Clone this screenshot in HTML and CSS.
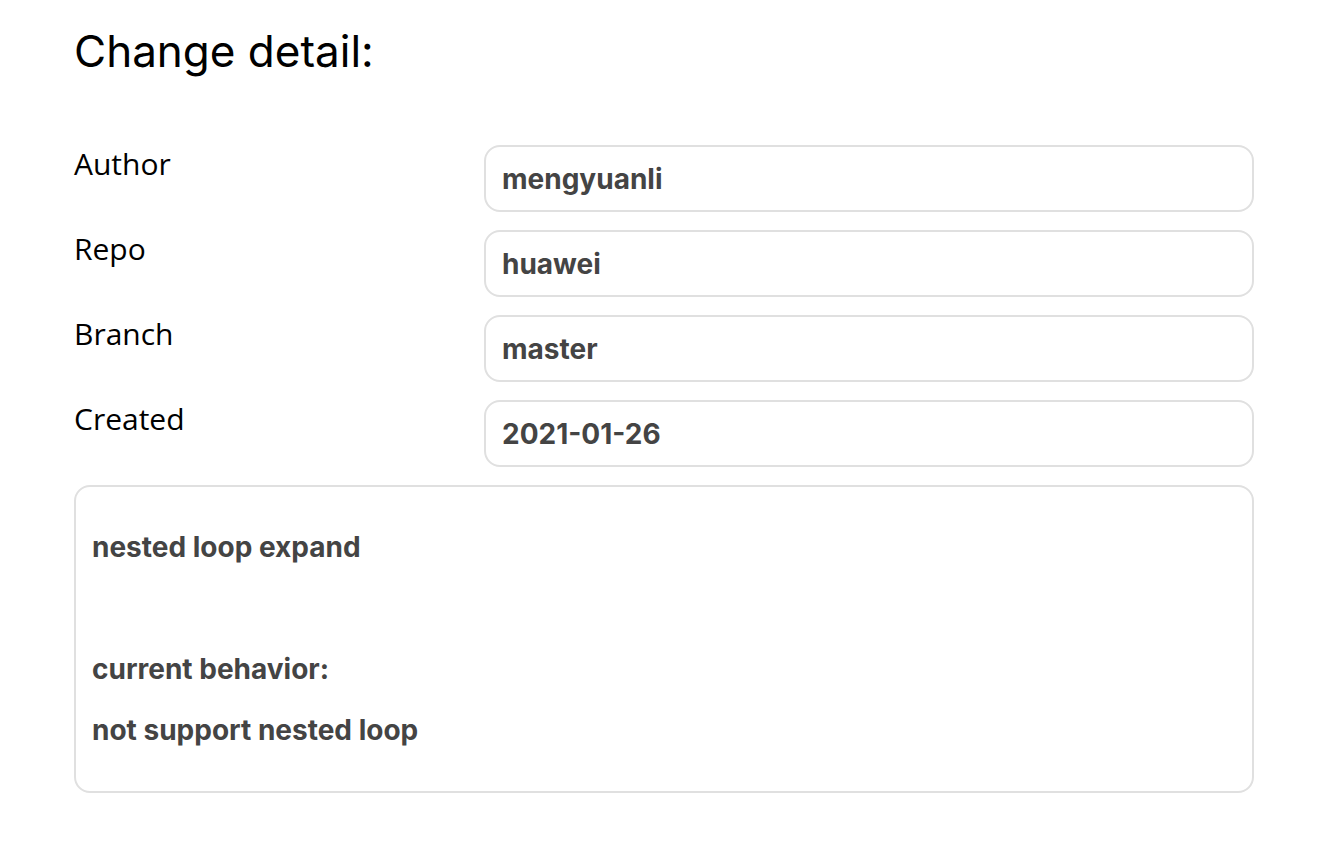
FILE: index.html
```html
<!DOCTYPE html>
<html>
<head>
<meta charset="utf-8">
<link rel="stylesheet" href="styles.css">
</head>
<body>
<main class="page">
  <h1 class="title">Change detail:</h1>
  <div class="fields">
    <div class="label">Author</div>
    <div class="value">mengyuanli</div>
    <div class="label">Repo</div>
    <div class="value">huawei</div>
    <div class="label">Branch</div>
    <div class="value">master</div>
    <div class="label">Created</div>
    <div class="value">2021-01-26</div>
  </div>
  <div class="description">
    <p>nested loop expand</p>
    <p class="blank">&nbsp;</p>
    <p>current behavior:</p>
    <p>not support nested loop</p>
  </div>
</main>
</body>
</html>
```

FILE: styles.css
```css
* { box-sizing: border-box; }
html, body { margin: 0; padding: 0; background: #fff; }
body { font-family: Inter, "Liberation Sans", sans-serif; color: #000; }
.page { padding: 21px 68px 0 74px; }
.title {
  margin: 0 0 64px 0;
  font-size: 44px;
  font-weight: 400;
  line-height: 60px;
}
.fields {
  display: grid;
  grid-template-columns: 410px 1fr;
  row-gap: 18px;
}
.label {
  font-family: "Open Sans", "Noto Sans", sans-serif;
  font-size: 30px;
  line-height: 38px;
}
.value {
  height: 67px;
  border: 2px solid #e0e0e0;
  border-radius: 16px;
  padding: 0 16px;
  display: flex;
  align-items: center;
  font-size: 28px;
  font-weight: 700;
  color: #444;
}
.description {
  margin-top: 18px;
  border: 2px solid #e0e0e0;
  border-radius: 16px;
  padding: 30px 16px 30px 16px;
  height: 308px;
  font-size: 28px;
  font-weight: 700;
  color: #444;
}
.description p { margin: 0; line-height: 61px; }
```
